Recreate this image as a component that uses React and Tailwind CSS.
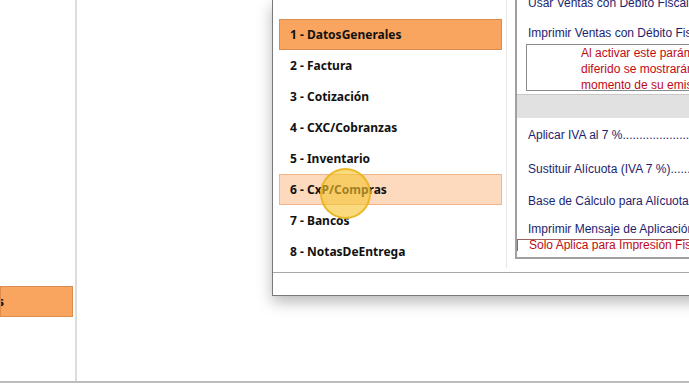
import React from "react";

const modules = [
  "1 - DatosGenerales",
  "2 - Factura",
  "3 - Cotización",
  "4 - CXC/Cobranzas",
  "5 - Inventario",
  "6 - CxP/Compras",
  "7 - Bancos",
  "8 - NotasDeEntrega",
];

function ModuleItem({ label, state }) {
  const tone =
    state === "active"
      ? "bg-[#f9a560] border-[#dc8c4c]"
      : state === "hover"
      ? "bg-[#fdd9bd] border-[#f1b58c]"
      : "border-transparent";
  return (
    <div
      className={`h-[31px] shrink-0 flex items-center pl-[10px] border whitespace-nowrap text-[12px] font-bold text-[#111] ${tone}`}
    >
      {label}
    </div>
  );
}

function SettingRow({ children, className = "" }) {
  return (
    <div className={`pl-[11px] whitespace-nowrap text-[#1e1e6e] ${className}`}>
      {children}
    </div>
  );
}

export default function App() {
  return (
    <div className="relative w-[689px] h-[385px] overflow-hidden bg-white font-['Noto_Sans',sans-serif]">
      {/* background app */}
      <div className="flex h-[383px] border-b-2 border-[#bdbdbd]">
        <div className="w-[77px] shrink-0 border-r-2 border-[#dcdcdc] flex flex-col pt-[286px]">
          <div className="h-[31px] w-[73px] bg-[#f9a560] border border-[#dc8c4c] flex items-center justify-end overflow-hidden text-[12px] font-bold text-[#111]">
            <span className="mr-[68px]">s</span>
          </div>
        </div>
        <div className="flex-1" />
      </div>

      {/* config dialog */}
      <div className="absolute left-[272px] top-0 w-[440px] h-[296px] bg-white border-l border-b border-[#7a7a7a] shadow-[0_6px_14px_rgba(0,0,0,0.28)] flex flex-col">
        <div className="h-[273px] border-b border-[#a8a8a8] flex">
          {/* module list */}
          <div className="w-[234px] shrink-0 h-[268px] border-r border-[#e6e6e6] pt-[19px] pl-[6px] pr-[4px] flex flex-col">
            {modules.map((m, i) => (
              <ModuleItem
                key={m}
                label={m}
                state={i === 0 ? "active" : i === 5 ? "hover" : ""}
              />
            ))}
          </div>

          {/* settings panel */}
          <div className="ml-[8px] flex-1 min-w-0 overflow-hidden h-[259px] border-l-2 border-b-2 border-l-[#a0a0a0] border-b-[#a0a0a0] font-['Liberation_Sans',sans-serif] text-[12px] leading-[16px] flex flex-col">
            <SettingRow className="-mt-[5px] h-[16px]">Usar Ventas con Débito Fiscal Diferido</SettingRow>
            <SettingRow className="mt-[14px] h-[16px]">Imprimir Ventas con Débito Fiscal Diferido</SettingRow>
            <div className="ml-[9px] mt-[3px] h-[47px] shrink-0 border border-[#8a8a8a] border-r-0 pl-[54px] text-[#c00a14] whitespace-nowrap">
              <div>Al activar este parámetro las ventas con débito</div>
              <div>diferido se mostrarán en el libro de ventas al</div>
              <div>momento de su emisión</div>
            </div>
            <div className="mt-[3px] h-[24px] shrink-0 bg-[#e1e1e1] border-t border-[#c8c8c8]" />
            <SettingRow className="mt-[9px] h-[16px]">
              Aplicar IVA al 7 %.......................................
            </SettingRow>
            <SettingRow className="mt-[18px] h-[16px]">
              Sustituir Alícuota (IVA 7 %).............................
            </SettingRow>
            <SettingRow className="mt-[16px] h-[16px]">
              Base de Cálculo para Alícuota
            </SettingRow>
            <SettingRow className="mt-[12px] h-[16px]">
              Imprimir Mensaje de Aplicación
            </SettingRow>
            <div className="mt-[2px] h-[12px] shrink-0 border-t border-l border-[#a06060] pl-[11px] text-[#c00a14] leading-[11px] overflow-hidden whitespace-nowrap">
              Solo Aplica para Impresión Fiscal
            </div>
          </div>
        </div>
        <div className="flex-1 bg-white" />
      </div>

      {/* click indicator */}
      <div className="absolute left-[320px] top-[168px] w-[51px] h-[51px] rounded-full bg-[rgba(246,196,48,0.62)] border-2 border-[rgba(232,176,20,0.8)]" />
    </div>
  );
}
